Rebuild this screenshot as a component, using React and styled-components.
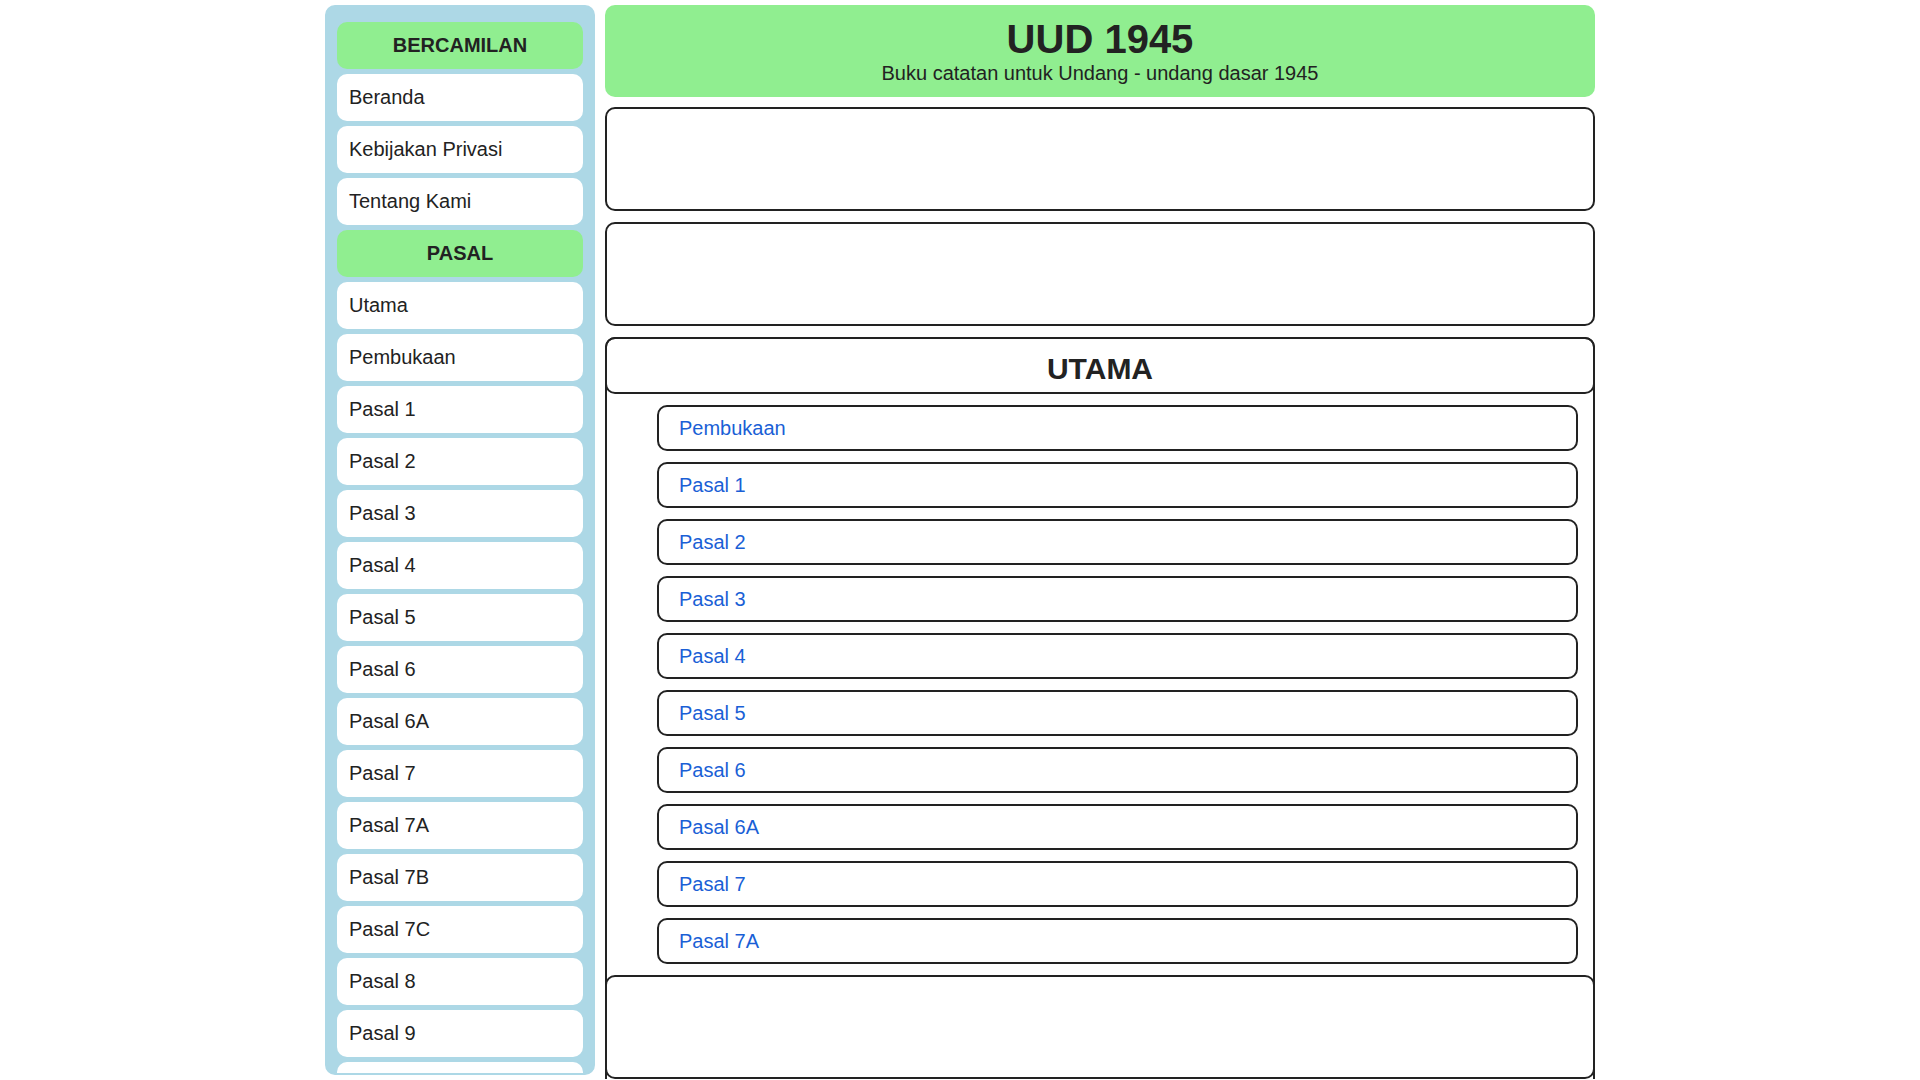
import React from "react";
import styled, { createGlobalStyle } from "styled-components";

const GlobalStyle = createGlobalStyle`
  * {
    box-sizing: border-box;
  }

  html,
  body {
    margin: 0;
    padding: 0;
    background: #fff;
  }

  body {
    font-family: "Liberation Sans", Arial, sans-serif;
    font-size: 20px;
    color: #222;
  }
`;

const Page = styled.div`
  width: 1270px;
  margin: 0 auto;
  padding: 5px 0;
  display: flex;
  align-items: flex-start;
  gap: 10px;
`;

const Sidebar = styled.nav`
  flex: 0 0 270px;
  height: calc(100vh - 10px);
  position: sticky;
  top: 5px;
  display: flex;
  flex-direction: column;
  gap: 5px;
  padding: 15px 10px;
  background: #add8e6;
  border: 2px solid #add8e6;
  border-radius: 10px;
  overflow: hidden;
`;

const SideItem = styled.a`
  flex-shrink: 0;
  display: block;
  padding: 12px;
  line-height: 23px;
  font-size: 20px;
  color: #222;
  text-decoration: none;
  border-radius: 10px;
  background: ${({ $heading }) => ($heading ? "#90ee90" : "#fff")};
  font-weight: ${({ $heading }) => ($heading ? 700 : 400)};
  text-align: ${({ $heading }) => ($heading ? "center" : "left")};
`;

const Main = styled.main`
  flex: 0 0 990px;
  display: flex;
  flex-direction: column;
`;

const Banner = styled.header`
  margin-bottom: 10px;
  padding: 11px 11px 12px;
  background: #90ee90;
  border-radius: 10px;
  text-align: center;
`;

const Title = styled.h1`
  margin: 0;
  font-size: 40px;
  line-height: 46px;
  font-weight: 700;
`;

const Subtitle = styled.p`
  margin: 0;
  font-size: 20px;
  line-height: 23px;
`;

const AdSlot = styled.div`
  flex-shrink: 0;
  height: 104px;
  border: 2px solid #222;
  border-radius: 10px;
  background: #fff;
  margin: ${({ $inset }) => ($inset ? "0 -2px" : "0 0 11px")};
`;

const Section = styled.section`
  border: 2px solid #222;
  border-bottom: none;
  border-radius: 10px 10px 0 0;
`;

const SectionTitle = styled.h2`
  margin: -2px -2px 0;
  padding: 13px 10px 6px;
  font-size: 30px;
  line-height: 34px;
  font-weight: 700;
  text-align: center;
  border: 2px solid #222;
  border-radius: 10px;
`;

const LinkList = styled.ul`
  list-style: none;
  margin: 0;
  padding: 11px 15px 11px 50px;
  display: flex;
  flex-direction: column;
  gap: 11px;
`;

const LinkItem = styled.a`
  display: block;
  padding: 9px 20px;
  line-height: 24px;
  font-size: 20px;
  color: #1a5fd6;
  text-decoration: none;
  border: 2px solid #222;
  border-radius: 10px;
`;

const sideMenu = [
  { label: "BERCAMILAN", heading: true },
  { label: "Beranda" },
  { label: "Kebijakan Privasi" },
  { label: "Tentang Kami" },
  { label: "PASAL", heading: true },
  { label: "Utama" },
  { label: "Pembukaan" },
  ...["1", "2", "3", "4", "5", "6", "6A", "7", "7A", "7B", "7C", "8", "9", "10", "11", "12"].map(
    (n) => ({ label: `Pasal ${n}` })
  ),
];

const mainLinks = ["Pembukaan", "Pasal 1", "Pasal 2", "Pasal 3", "Pasal 4", "Pasal 5", "Pasal 6", "Pasal 6A", "Pasal 7", "Pasal 7A"];

const App = () => {
  return (
    <>
      <GlobalStyle />
      <Page>
        <Sidebar>
          {sideMenu.map((item) => (
            <SideItem key={item.label} href="#" $heading={item.heading}>
              {item.label}
            </SideItem>
          ))}
        </Sidebar>
        <Main>
          <Banner>
            <Title>UUD 1945</Title>
            <Subtitle>Buku catatan untuk Undang - undang dasar 1945</Subtitle>
          </Banner>
          <AdSlot />
          <AdSlot />
          <Section>
            <SectionTitle>UTAMA</SectionTitle>
            <LinkList>
              {mainLinks.map((label) => (
                <li key={label}>
                  <LinkItem href="#">{label}</LinkItem>
                </li>
              ))}
            </LinkList>
            <AdSlot $inset />
          </Section>
        </Main>
      </Page>
    </>
  );
};

export default App;
